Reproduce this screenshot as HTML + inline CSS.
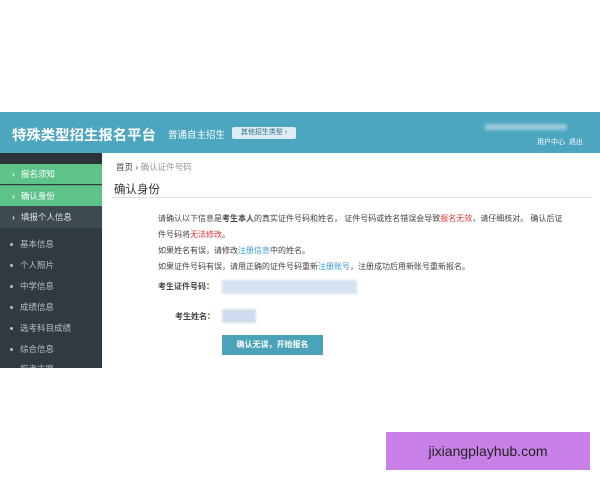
<!DOCTYPE html>
<html><head><meta charset="utf-8"><style>
body{margin:0;width:600px;height:480px;background:#fff;position:relative;overflow:hidden;font-family:"Liberation Sans","Noto Sans CJK SC",sans-serif;}
.a{position:absolute;}
.hdr{left:0;top:112px;width:600px;height:41px;background:#4ca6c0;}
.side{left:0;top:153px;width:102px;height:215px;background:#2f3a41;}
.si{position:absolute;left:0;width:102px;font-size:8.5px;color:#fff;line-height:20px;padding-left:12px;box-sizing:border-box;}
.si span{margin-right:6px;font-weight:bold}
.sub{position:absolute;left:10px;font-size:8.5px;color:#b8c0c4;}
.sub:before{content:"";display:inline-block;width:3px;height:3px;background:#b8c0c4;border-radius:50%;margin-right:7px;vertical-align:middle}
.t{font-size:8px;color:#444;}
</style></head><body>
<div class="a hdr"></div>
<div class="a" style="left:12px;top:124px;font-size:14.4px;font-weight:bold;color:#fff;letter-spacing:0">特殊类型招生报名平台</div>
<div class="a" style="left:168px;top:127px;font-size:9.5px;color:#fff;">普通自主招生</div>
<div class="a" style="left:232px;top:127px;width:64px;height:12px;background:#dcecf2;border-radius:2px;font-size:7px;color:#2b6f86;line-height:12px;text-align:center;">其他招生类型 ›</div>
<div class="a" style="left:485px;top:124px;width:82px;height:6px;background:#9ccbdb;filter:blur(1.5px);"></div>
<div class="a" style="left:537px;top:137px;font-size:7px;color:#fff;">用户中心&nbsp;&nbsp;退出</div>
<div class="a side"></div>
<div class="a" style="left:0;top:153px;width:102px;height:11px;background:#2b3338"></div>
<div class="si" style="top:164px;background:#5dc389;"><span>›</span>报名须知</div>
<div class="si" style="top:185px;background:#5dc389;border-top:1px solid #4aa876"><span>›</span>确认身份</div>
<div class="si" style="top:206px;background:#3e4a52;height:22px;line-height:22px;color:#dfe4e6"><span>›</span>填报个人信息</div>
<div class="sub" style="top:238px">基本信息</div>
<div class="sub" style="top:259px">个人照片</div>
<div class="sub" style="top:280px">中学信息</div>
<div class="sub" style="top:301px">成绩信息</div>
<div class="sub" style="top:322px">选考科目成绩</div>
<div class="sub" style="top:343px">综合信息</div>
<div class="sub" style="top:363px;height:5px;overflow:hidden">报考志愿</div>
<div class="a" style="left:116px;top:161px;font-size:8.5px;color:#444">首页 › <span style="color:#999">确认证件号码</span></div>
<div class="a" style="left:114px;top:181px;font-size:11.5px;color:#333">确认身份</div>
<div class="a" style="left:112px;top:197px;width:480px;height:1px;background:#ddd"></div>
<div class="a t" style="left:158px;top:211px;width:440px;line-height:16px;">请确认以下信息是<b>考生本人</b>的真实证件号码和姓名， 证件号码或姓名错误会导致<span style="color:#e33">报名无效</span>，请仔细核对。 确认后证<br>件号码将<span style="color:#e33">无法修改</span>。<br>如果姓名有误，请修改<span style="color:#3a9fd8">注册信息</span>中的姓名。<br>如果证件号码有误，请用正确的证件号码重新<span style="color:#3a9fd8">注册账号</span>，注册成功后用新账号重新报名。</div>
<div class="a t" style="left:158px;top:281px;font-weight:bold">考生证件号码：</div>
<div class="a" style="left:222px;top:280px;width:135px;height:14px;background:#d5e2f2;filter:blur(1px)"></div>
<div class="a t" style="left:175px;top:311px;font-weight:bold">考生姓名：</div>
<div class="a" style="left:222px;top:309px;width:34px;height:14px;background:#cfdcef;filter:blur(1px)"></div>
<div class="a" style="left:222px;top:335px;width:101px;height:20px;background:#4aa3b8;color:#fff;font-size:8px;line-height:20px;text-align:center;font-weight:bold">确认无误，开始报名</div>
<div class="a" style="left:386px;top:432px;width:204px;height:38px;background:#c880e6;font-size:14px;color:#222;line-height:38px;text-align:center">jixiangplayhub.com</div>
</body></html>
